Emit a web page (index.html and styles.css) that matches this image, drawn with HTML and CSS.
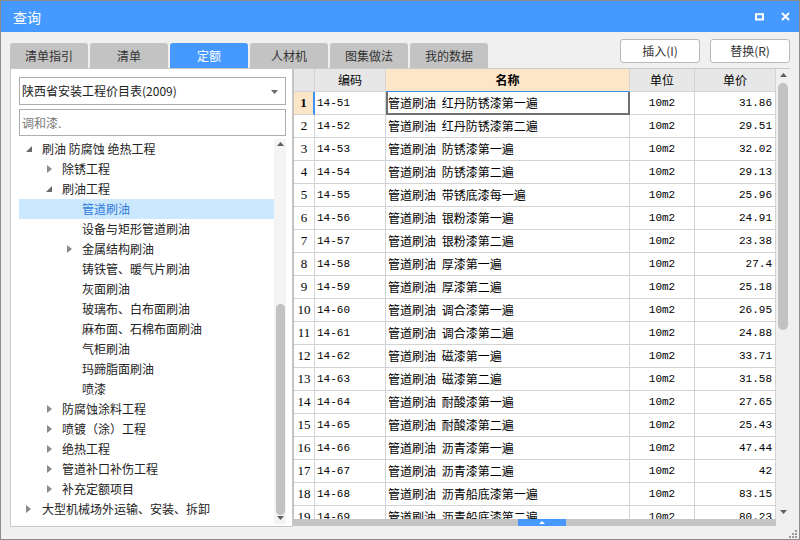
FILE: index.html
```html
<!DOCTYPE html>
<html lang="zh">
<head>
<meta charset="utf-8">
<title>查询</title>
<link rel="stylesheet" href="styles.css">
</head>
<body>
<div class="window">
  <div class="titlebar">
    <span class="title">查询</span>
    <div class="ctrls">
      <svg width="9" height="8" viewBox="0 0 9 8"><rect x="1" y="1.2" width="7" height="5.3" fill="none" stroke="#fff" stroke-width="2"/></svg>
      <svg width="9" height="9" viewBox="0 0 9 9"><path d="M1 1L8 8M8 1L1 8" stroke="#fff" stroke-width="2" fill="none"/></svg>
    </div>
  </div>
  <div class="toolbar">
    <div class="tabs">
      <div class="tab">清单指引</div>
      <div class="tab">清单</div>
      <div class="tab active">定额</div>
      <div class="tab">人材机</div>
      <div class="tab">图集做法</div>
      <div class="tab">我的数据</div>
    </div>
    <div class="actions">
      <div class="btn">插入(I)</div>
      <div class="btn">替换(R)</div>
    </div>
  </div>
  <div class="main">
    <div class="left">
      <div class="select"><span class="sel-text">陕西省安装工程价目表(2009)</span><svg class="caret" width="7" height="4" viewBox="0 0 7 4"><path d="M0 0H7L3.5 4Z" fill="#6a6a6a"/></svg></div>
      <div class="search">调和漆.</div>
      <div class="tree-wrap">
        <div class="tree">
          <div class="node l0"><span class="tw"><svg width="6" height="6" viewBox="0 0 6 6"><path d="M6 0V6H0Z" fill="#6b6b6b"/></svg></span>刷油 防腐蚀 绝热工程</div>
          <div class="node l1"><span class="tw"><svg width="5" height="8" viewBox="0 0 5 8"><path d="M0 0L5 4L0 8Z" fill="#8a8a8a"/></svg></span>除锈工程</div>
          <div class="node l1"><span class="tw"><svg width="6" height="6" viewBox="0 0 6 6"><path d="M6 0V6H0Z" fill="#6b6b6b"/></svg></span>刷油工程</div>
          <div class="node l2 sel"><span class="tw"></span>管道刷油</div>
          <div class="node l2"><span class="tw"></span>设备与矩形管道刷油</div>
          <div class="node l2"><span class="tw"><svg width="5" height="8" viewBox="0 0 5 8"><path d="M0 0L5 4L0 8Z" fill="#8a8a8a"/></svg></span>金属结构刷油</div>
          <div class="node l2"><span class="tw"></span>铸铁管、暖气片刷油</div>
          <div class="node l2"><span class="tw"></span>灰面刷油</div>
          <div class="node l2"><span class="tw"></span>玻璃布、白布面刷油</div>
          <div class="node l2"><span class="tw"></span>麻布面、石棉布面刷油</div>
          <div class="node l2"><span class="tw"></span>气柜刷油</div>
          <div class="node l2"><span class="tw"></span>玛蹄脂面刷油</div>
          <div class="node l2"><span class="tw"></span>喷漆</div>
          <div class="node l1"><span class="tw"><svg width="5" height="8" viewBox="0 0 5 8"><path d="M0 0L5 4L0 8Z" fill="#8a8a8a"/></svg></span>防腐蚀涂料工程</div>
          <div class="node l1"><span class="tw"><svg width="5" height="8" viewBox="0 0 5 8"><path d="M0 0L5 4L0 8Z" fill="#8a8a8a"/></svg></span>喷镀（涂）工程</div>
          <div class="node l1"><span class="tw"><svg width="5" height="8" viewBox="0 0 5 8"><path d="M0 0L5 4L0 8Z" fill="#8a8a8a"/></svg></span>绝热工程</div>
          <div class="node l1"><span class="tw"><svg width="5" height="8" viewBox="0 0 5 8"><path d="M0 0L5 4L0 8Z" fill="#8a8a8a"/></svg></span>管道补口补伤工程</div>
          <div class="node l1"><span class="tw"><svg width="5" height="8" viewBox="0 0 5 8"><path d="M0 0L5 4L0 8Z" fill="#8a8a8a"/></svg></span>补充定额项目</div>
          <div class="node l0"><span class="tw"><svg width="5" height="8" viewBox="0 0 5 8"><path d="M0 0L5 4L0 8Z" fill="#8a8a8a"/></svg></span>大型机械场外运输、安装、拆卸</div>
        </div>
        <div class="tscroll">
          <svg class="arr-up" width="7" height="4" viewBox="0 0 7 4"><path d="M0 4H7L3.5 0Z" fill="#5e5e5e"/></svg>
          <div class="tthumb"></div>
          <svg class="arr-dn" width="7" height="4" viewBox="0 0 7 4"><path d="M0 0H7L3.5 4Z" fill="#5e5e5e"/></svg>
        </div>
      </div>
    </div>
    <div class="grid">
      <div class="grid-body">
        <div class="cells">
          <div class="row head">
            <div class="c num"></div><div class="c code">编码</div><div class="c name">名称</div><div class="c unit">单位</div><div class="c price">单价</div>
          </div>
          <div class="row cur"><div class="c num">1</div><div class="c code">14-51</div><div class="c name">管道刷油 红丹防锈漆第一遍</div><div class="c unit">10m2</div><div class="c price">31.86</div></div>
          <div class="row"><div class="c num">2</div><div class="c code">14-52</div><div class="c name">管道刷油 红丹防锈漆第二遍</div><div class="c unit">10m2</div><div class="c price">29.51</div></div>
          <div class="row"><div class="c num">3</div><div class="c code">14-53</div><div class="c name">管道刷油 防锈漆第一遍</div><div class="c unit">10m2</div><div class="c price">32.02</div></div>
          <div class="row"><div class="c num">4</div><div class="c code">14-54</div><div class="c name">管道刷油 防锈漆第二遍</div><div class="c unit">10m2</div><div class="c price">29.13</div></div>
          <div class="row"><div class="c num">5</div><div class="c code">14-55</div><div class="c name">管道刷油 带锈底漆每一遍</div><div class="c unit">10m2</div><div class="c price">25.96</div></div>
          <div class="row"><div class="c num">6</div><div class="c code">14-56</div><div class="c name">管道刷油 银粉漆第一遍</div><div class="c unit">10m2</div><div class="c price">24.91</div></div>
          <div class="row"><div class="c num">7</div><div class="c code">14-57</div><div class="c name">管道刷油 银粉漆第二遍</div><div class="c unit">10m2</div><div class="c price">23.38</div></div>
          <div class="row"><div class="c num">8</div><div class="c code">14-58</div><div class="c name">管道刷油 厚漆第一遍</div><div class="c unit">10m2</div><div class="c price">27.4</div></div>
          <div class="row"><div class="c num">9</div><div class="c code">14-59</div><div class="c name">管道刷油 厚漆第二遍</div><div class="c unit">10m2</div><div class="c price">25.18</div></div>
          <div class="row"><div class="c num">10</div><div class="c code">14-60</div><div class="c name">管道刷油 调合漆第一遍</div><div class="c unit">10m2</div><div class="c price">26.95</div></div>
          <div class="row"><div class="c num">11</div><div class="c code">14-61</div><div class="c name">管道刷油 调合漆第二遍</div><div class="c unit">10m2</div><div class="c price">24.88</div></div>
          <div class="row"><div class="c num">12</div><div class="c code">14-62</div><div class="c name">管道刷油 磁漆第一遍</div><div class="c unit">10m2</div><div class="c price">33.71</div></div>
          <div class="row"><div class="c num">13</div><div class="c code">14-63</div><div class="c name">管道刷油 磁漆第二遍</div><div class="c unit">10m2</div><div class="c price">31.58</div></div>
          <div class="row"><div class="c num">14</div><div class="c code">14-64</div><div class="c name">管道刷油 耐酸漆第一遍</div><div class="c unit">10m2</div><div class="c price">27.65</div></div>
          <div class="row"><div class="c num">15</div><div class="c code">14-65</div><div class="c name">管道刷油 耐酸漆第二遍</div><div class="c unit">10m2</div><div class="c price">25.43</div></div>
          <div class="row"><div class="c num">16</div><div class="c code">14-66</div><div class="c name">管道刷油 沥青漆第一遍</div><div class="c unit">10m2</div><div class="c price">47.44</div></div>
          <div class="row"><div class="c num">17</div><div class="c code">14-67</div><div class="c name">管道刷油 沥青漆第二遍</div><div class="c unit">10m2</div><div class="c price">42</div></div>
          <div class="row"><div class="c num">18</div><div class="c code">14-68</div><div class="c name">管道刷油 沥青船底漆第一遍</div><div class="c unit">10m2</div><div class="c price">83.15</div></div>
          <div class="row"><div class="c num">19</div><div class="c code">14-69</div><div class="c name">管道刷油 沥青船底漆第二遍</div><div class="c unit">10m2</div><div class="c price">80.23</div></div>
        </div>
        <div class="vscroll">
          <svg class="arr-up" width="7" height="4" viewBox="0 0 7 4"><path d="M0 4H7L3.5 0Z" fill="#5e5e5e"/></svg>
          <div class="vthumb"></div>
          <svg class="arr-dn" width="7" height="4" viewBox="0 0 7 4"><path d="M0 0H7L3.5 4Z" fill="#5e5e5e"/></svg>
        </div>
      </div>
      <div class="hbar"><div class="handle"><svg width="6" height="3" viewBox="0 0 6 3"><path d="M0 3H6L3 0Z" fill="#fff"/></svg></div></div>
    </div>
  </div>
  <div class="statusbar">
    <svg class="grip" width="10" height="10" viewBox="0 0 10 10"><g fill="#9a9a9a"><rect x="7" y="1" width="2" height="2"/><rect x="4" y="4" width="2" height="2"/><rect x="7" y="4" width="2" height="2"/><rect x="1" y="7" width="2" height="2"/><rect x="4" y="7" width="2" height="2"/><rect x="7" y="7" width="2" height="2"/></g></svg>
  </div>
</div>
</body>
</html>
```

FILE: styles.css
```css
* { box-sizing: border-box; }
html, body { margin: 0; padding: 0; }
body {
  width: 800px;
  height: 540px;
  overflow: hidden;
  font-family: "Noto Sans CJK SC", "Noto Sans", sans-serif;
  font-size: 12px;
  color: #222;
}
.window {
  width: 800px;
  height: 540px;
  border: 1px solid #8c8c8c;
  background: #f0f0f0;
  display: flex;
  flex-direction: column;
}
.titlebar {
  height: 31px;
  flex: none;
  background: #4599ff;
  color: #fff;
  display: flex;
  align-items: center;
  padding: 0 9px 0 12px;
}
.title { flex: 1; font-size: 14px; line-height: 16px; }
.ctrls { display: flex; align-items: center; gap: 17px; }

.toolbar {
  height: 36px;
  flex: none;
  display: flex;
  justify-content: space-between;
  padding: 0 9px;
}
.tabs { display: flex; align-items: flex-end; gap: 2px; }
.tab {
  width: 78px;
  height: 25px;
  background: #c3c3c3;
  border-radius: 3px 3px 0 0;
  color: #333;
  display: flex;
  align-items: center;
  justify-content: center;
  line-height: 14px;
}
.tab.active { background: #4599ff; color: #fff; }
.actions { display: flex; gap: 10px; padding-top: 7px; padding-right: 0; }
.btn {
  width: 80px;
  height: 24px;
  background: #fff;
  border: 1px solid #b9b9b9;
  border-radius: 3px;
  color: #333;
  display: flex;
  align-items: center;
  justify-content: center;
  line-height: 14px;
}

.main {
  height: 459px;
  flex: none;
  display: flex;
  padding: 0 9px;
}
.left {
  width: 283px;
  flex: none;
  background: #fff;
  border: 1px solid #c9c9c9;
  display: flex;
  flex-direction: column;
  padding: 8px 6px 2px 8px;
}
.select {
  height: 28px;
  flex: none;
  border: 1px solid #adadad;
  display: flex;
  align-items: center;
  padding: 0 7px 0 2px;
  color: #222;
}
.sel-text { flex: 1; line-height: 14px; }
.caret { margin-top: 1px; }
.search {
  height: 27px;
  flex: none;
  margin-top: 4px;
  border: 1px solid #adadad;
  display: flex;
  align-items: center;
  padding-left: 2px;
  color: #7a7a7a;
  line-height: 14px;
}
.tree-wrap {
  flex: 1;
  margin-top: 3px;
  display: flex;
  min-height: 0;
}
.tree { flex: 1; overflow: hidden; }
.node {
  height: 20px;
  display: flex;
  align-items: center;
  white-space: nowrap;
  color: #222;
  line-height: 14px;
}
.node.l0 { padding-left: 7px; }
.node.l1 { padding-left: 27px; }
.node.l2 { padding-left: 47px; }
.tw { width: 16px; flex: none; display: flex; align-items: center; }
.node.l1 .tw svg[height="8"], .node.l2 .tw svg[height="8"] { margin-left: 1px; }
.node.sel { background: #cce8ff; color: #2f7ad8; }

.tscroll {
  width: 12px;
  flex: none;
  background: #f4f4f4;
  display: flex;
  flex-direction: column;
  align-items: center;
}
.tscroll .arr-up { margin-top: 3px; flex: none; }
.tthumb {
  width: 9px;
  height: 211px;
  margin-top: auto;
  background: #c2c2c2;
  border-radius: 5px;
  flex: none;
}
.tscroll .arr-dn { margin: 1px 0 4px; flex: none; }

.grid {
  width: 497px;
  flex: none;
  border-top: 1px solid #c9c9c9;
  display: flex;
  flex-direction: column;
}
.grid-body { height: 450px; flex: none; display: flex; }
.cells {
  width: 483px;
  flex: none;
  overflow: hidden;
  background: #fff;
  border-left: 1px solid #c0c0c0;
}
.row {
  display: grid;
  grid-template-columns: 21px 71px 244px 65px 81px;
  height: 23px;
}
.c {
  border-right: 1px solid #d3d3d3;
  border-bottom: 1px solid #d3d3d3;
  display: flex;
  align-items: center;
  white-space: nowrap;
  overflow: hidden;
  color: #000;
}
.c.num {
  justify-content: center;
  font-family: "Liberation Serif", serif;
  font-size: 13px;
  background: #fff;
}
.c.code { padding-left: 2px; font-family: "Liberation Mono", monospace; font-size: 11px; }
.c.name { padding-left: 2px; font-size: 12px; word-spacing: 3px; line-height: 14px; }
.c.unit { justify-content: center; font-family: "Liberation Mono", monospace; font-size: 11px; }
.c.price { justify-content: flex-end; padding-right: 3px; font-family: "Liberation Mono", monospace; font-size: 11px; }

.row.head .c {
  background: #e7e7e7;
  justify-content: center;
  font-family: "Noto Sans CJK SC", sans-serif;
  font-size: 12px;
  padding: 0;
  line-height: 14px;
}
.row.head .c.name { background: #fde6c8; font-weight: bold; border-bottom-color: #3d8ff0; }
.row.cur .c.num { background: #fde6c8; font-weight: bold; border-right: 2px solid #3d8ff0; }
.row.cur .c.name {
  box-shadow: inset 2px 0 0 #707070, inset -1px 0 0 #707070, inset 0 -1px 0 #707070;
  border-right-color: #707070;
  border-bottom-color: #707070;
}

.vscroll {
  width: 14px;
  flex: none;
  background: #f0f0f0;
  display: flex;
  flex-direction: column;
  align-items: center;
}
.vscroll .arr-up { margin-top: 4px; flex: none; }
.vthumb {
  width: 10px;
  height: 247px;
  margin-top: 6px;
  background: #c2c2c2;
  border-radius: 5px;
  flex: none;
}
.vscroll .arr-dn { margin-top: auto; margin-bottom: 5px; flex: none; }

.hbar {
  height: 7px;
  flex: none;
  background: linear-gradient(to right, #c4c4c4 483px, #f0f0f0 483px);
  display: flex;
  justify-content: center;
}
.handle {
  width: 48px;
  height: 7px;
  background: #4599ff;
  display: flex;
  justify-content: center;
  align-items: center;
}

.statusbar {
  height: 12px;
  flex: none;
  display: flex;
  justify-content: flex-end;
  align-items: flex-end;
  padding-right: 1px;
}
.grip { display: block; }
```
